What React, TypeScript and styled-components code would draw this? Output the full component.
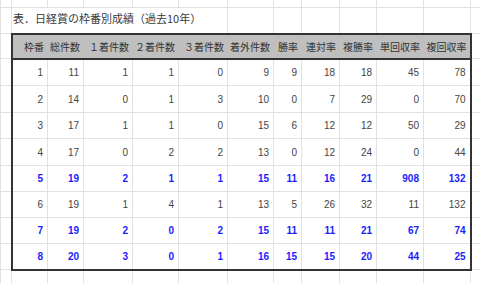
import styled, { createGlobalStyle } from "styled-components";

const GlobalStyle = createGlobalStyle`
  html, body {
    margin: 0;
    padding: 0;
    background: #ffffff;
    overflow: hidden;
  }
`;

const GRID = "#e1e1e1";
const INK = "#333333";

// widths between sheet gridlines, gutter columns on both ends
const colWidths = [11, 36, 36, 49, 46, 49, 46, 28, 38, 37, 47, 47, 10];
const rowHeights = [27, 27, 26, 27, 26, 26, 26, 26];

const headers = [
  "枠番",
  "総件数",
  "１着件数",
  "２着件数",
  "３着件数",
  "着外件数",
  "勝率",
  "連対率",
  "複勝率",
  "単回収率",
  "複回収率",
];

const rows = [
  { strong: false, values: [1, 11, 1, 1, 0, 9, 9, 18, 18, 45, 78] },
  { strong: false, values: [2, 14, 0, 1, 3, 10, 0, 7, 29, 0, 70] },
  { strong: false, values: [3, 17, 1, 1, 0, 15, 6, 12, 12, 50, 29] },
  { strong: false, values: [4, 17, 0, 2, 2, 13, 0, 12, 24, 0, 44] },
  { strong: true, values: [5, 19, 2, 1, 1, 15, 11, 16, 21, 908, 132] },
  { strong: false, values: [6, 19, 1, 4, 1, 13, 5, 26, 32, 11, 132] },
  { strong: true, values: [7, 19, 2, 0, 2, 15, 11, 11, 21, 67, 74] },
  { strong: true, values: [8, 20, 3, 0, 1, 16, 15, 15, 20, 44, 25] },
];

const Sheet = styled.table`
  border-collapse: collapse;
  table-layout: fixed;
  width: 480px;
  margin-top: -1px;
`;

const Row = styled.tr<{ $h: number }>`
  height: ${(p) => p.$h}px;
`;

const GridCell = styled.td`
  border: 1px solid ${GRID};
  padding: 0;
`;

const TitleCell = styled.td`
  border: 1px solid ${GRID};
  border-right-color: transparent;
  padding: 0 0 4px 1px;
  font-family: "Noto Sans CJK JP", "Noto Sans", sans-serif;
  font-size: 11px;
  color: #3a3a3a;
  white-space: nowrap;
  vertical-align: middle;
`;

const HeadCell = styled.th<{ $first?: boolean; $last?: boolean }>`
  background: #bfbfbf;
  border-top: 2px solid ${INK};
  border-bottom: 2px solid ${INK};
  border-left: ${(p) => (p.$first ? `2px solid ${INK}` : "1px solid #bfbfbf")};
  border-right: ${(p) => (p.$last ? `2px solid ${INK}` : "1px solid #bfbfbf")};
  padding: 0 3px 0 0;
  font-family: "Noto Sans CJK JP", "Noto Sans", sans-serif;
  font-size: 10px;
  font-weight: normal;
  color: #333333;
  text-align: right;
  white-space: nowrap;
  overflow: visible;
`;

const NumCell = styled.td<{
  $strong: boolean;
  $first?: boolean;
  $last?: boolean;
  $lastRow?: boolean;
}>`
  border: 1px solid ${GRID};
  ${(p) => p.$first && `border-left: 2px solid ${INK};`}
  ${(p) => p.$last && `border-right: 2px solid ${INK};`}
  ${(p) => p.$lastRow && `border-bottom: 2px solid ${INK};`}
  padding: 0 4px 0 0;
  text-align: right;
  vertical-align: middle;
  font-family: "Liberation Sans", Arial, sans-serif;
  font-size: 10px;
  font-weight: ${(p) => (p.$strong ? 700 : 400)};
  color: ${(p) => (p.$strong ? "#1c1cff" : "#444444")};
`;

const App = () => {
  const last = headers.length - 1;
  return (
    <>
      <GlobalStyle />
      <Sheet>
        <colgroup>
          {colWidths.map((w, i) => (
            <col key={i} style={{ width: w }} />
          ))}
        </colgroup>
        <tbody>
          <Row $h={8}>
            {colWidths.map((_, i) => (
              <GridCell key={i} />
            ))}
          </Row>
          <Row $h={26}>
            <GridCell />
            <TitleCell colSpan={4}>表．日経賞の枠番別成績（過去10年）</TitleCell>
            {colWidths.slice(5).map((_, i) => (
              <GridCell key={i} />
            ))}
          </Row>
          <Row $h={25}>
            <GridCell />
            {headers.map((h, i) => (
              <HeadCell key={h} $first={i === 0} $last={i === last}>
                {h}
              </HeadCell>
            ))}
            <GridCell />
          </Row>
          {rows.map((r, ri) => (
            <Row key={ri} $h={rowHeights[ri]}>
              <GridCell />
              {r.values.map((v, i) => (
                <NumCell
                  key={i}
                  $strong={r.strong}
                  $first={i === 0}
                  $last={i === last}
                  $lastRow={ri === rows.length - 1}
                >
                  {v}
                </NumCell>
              ))}
              <GridCell />
            </Row>
          ))}
          <Row $h={26}>
            {colWidths.map((_, i) => (
              <GridCell key={i} />
            ))}
          </Row>
        </tbody>
      </Sheet>
    </>
  );
};

export default App;
